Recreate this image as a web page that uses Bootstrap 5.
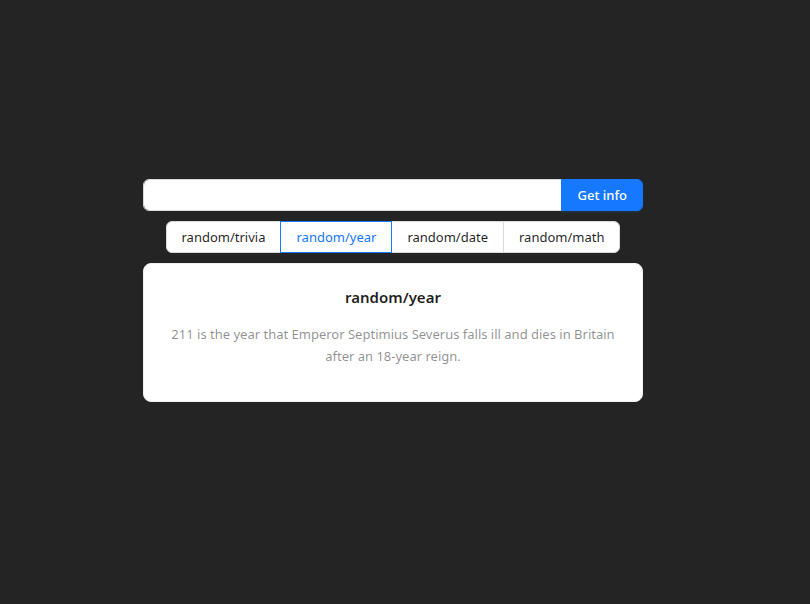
<!DOCTYPE html>
<html lang="en">
<head>
<meta charset="utf-8">
<meta name="viewport" content="width=device-width, initial-scale=1">
<title>Number facts</title>
<link href="https://cdn.jsdelivr.net/npm/bootstrap@5.3.0/dist/css/bootstrap.min.css" rel="stylesheet">
<style>
  body {
    background: #242424;
    color: rgba(0, 0, 0, .88);
    font-family: "Segoe UI", "Noto Sans", sans-serif;
    font-size: 13px;
    line-height: 22px;
  }
  .page { padding: 0 24px 23px 0; }
  .facts { max-width: 500px; gap: 10px; }
  .facts .form-control,
  .facts .btn {
    height: 32px;
    padding: 4px 15px;
    border-color: #d9d9d9;
    border-radius: 6px;
    font-size: 13px;
    line-height: 22px;
  }
  .facts .btn-outline-primary {
    --bs-btn-color: rgba(0, 0, 0, .88);
    --bs-btn-bg: #fff;
    --bs-btn-hover-color: #1677ff;
    --bs-btn-hover-bg: #fff;
    --bs-btn-active-color: #1677ff;
    --bs-btn-active-bg: #fff;
  }
  .facts .btn-check:checked + .btn { border-color: #1677ff; }
  .facts .btn-submit {
    background: #1677ff;
    border-color: #1677ff;
    color: #fff;
    font-weight: 500;
    box-shadow: 0 2px 0 rgba(5, 145, 255, .1);
  }
  .fact-card { border: 1px solid #f0f0f0; border-radius: 8px; }
  .fact-card .card-body { padding: 21px 24px 34px; }
  .fact-card h1 { font-size: 15px; line-height: 24px; font-weight: 600; margin-bottom: 14px; }
  .fact-card p { color: rgba(0, 0, 0, .45); }
</style>
</head>
<body>
<main class="page min-vh-100 d-flex align-items-center justify-content-center">
  <form class="facts w-100 d-flex flex-column align-items-center">
    <div class="input-group">
      <input type="text" class="form-control" aria-label="Number or date">
      <button type="button" class="btn btn-submit">Get info</button>
    </div>
    <div class="btn-group" role="group" aria-label="Fact type">
      <input type="radio" class="btn-check" name="kind" id="trivia">
      <label class="btn btn-outline-primary" for="trivia">random/trivia</label>
      <input type="radio" class="btn-check" name="kind" id="year" checked>
      <label class="btn btn-outline-primary" for="year">random/year</label>
      <input type="radio" class="btn-check" name="kind" id="date">
      <label class="btn btn-outline-primary" for="date">random/date</label>
      <input type="radio" class="btn-check" name="kind" id="math">
      <label class="btn btn-outline-primary" for="math">random/math</label>
    </div>
    <section class="card fact-card w-100 text-center">
      <div class="card-body">
        <h1>random/year</h1>
        <p class="mb-0">211 is the year that Emperor Septimius Severus falls ill and dies in Britain after an 18-year reign.</p>
      </div>
    </section>
  </form>
</main>
<script src="https://cdn.jsdelivr.net/npm/bootstrap@5.3.0/dist/js/bootstrap.bundle.min.js"></script>
</body>
</html>
